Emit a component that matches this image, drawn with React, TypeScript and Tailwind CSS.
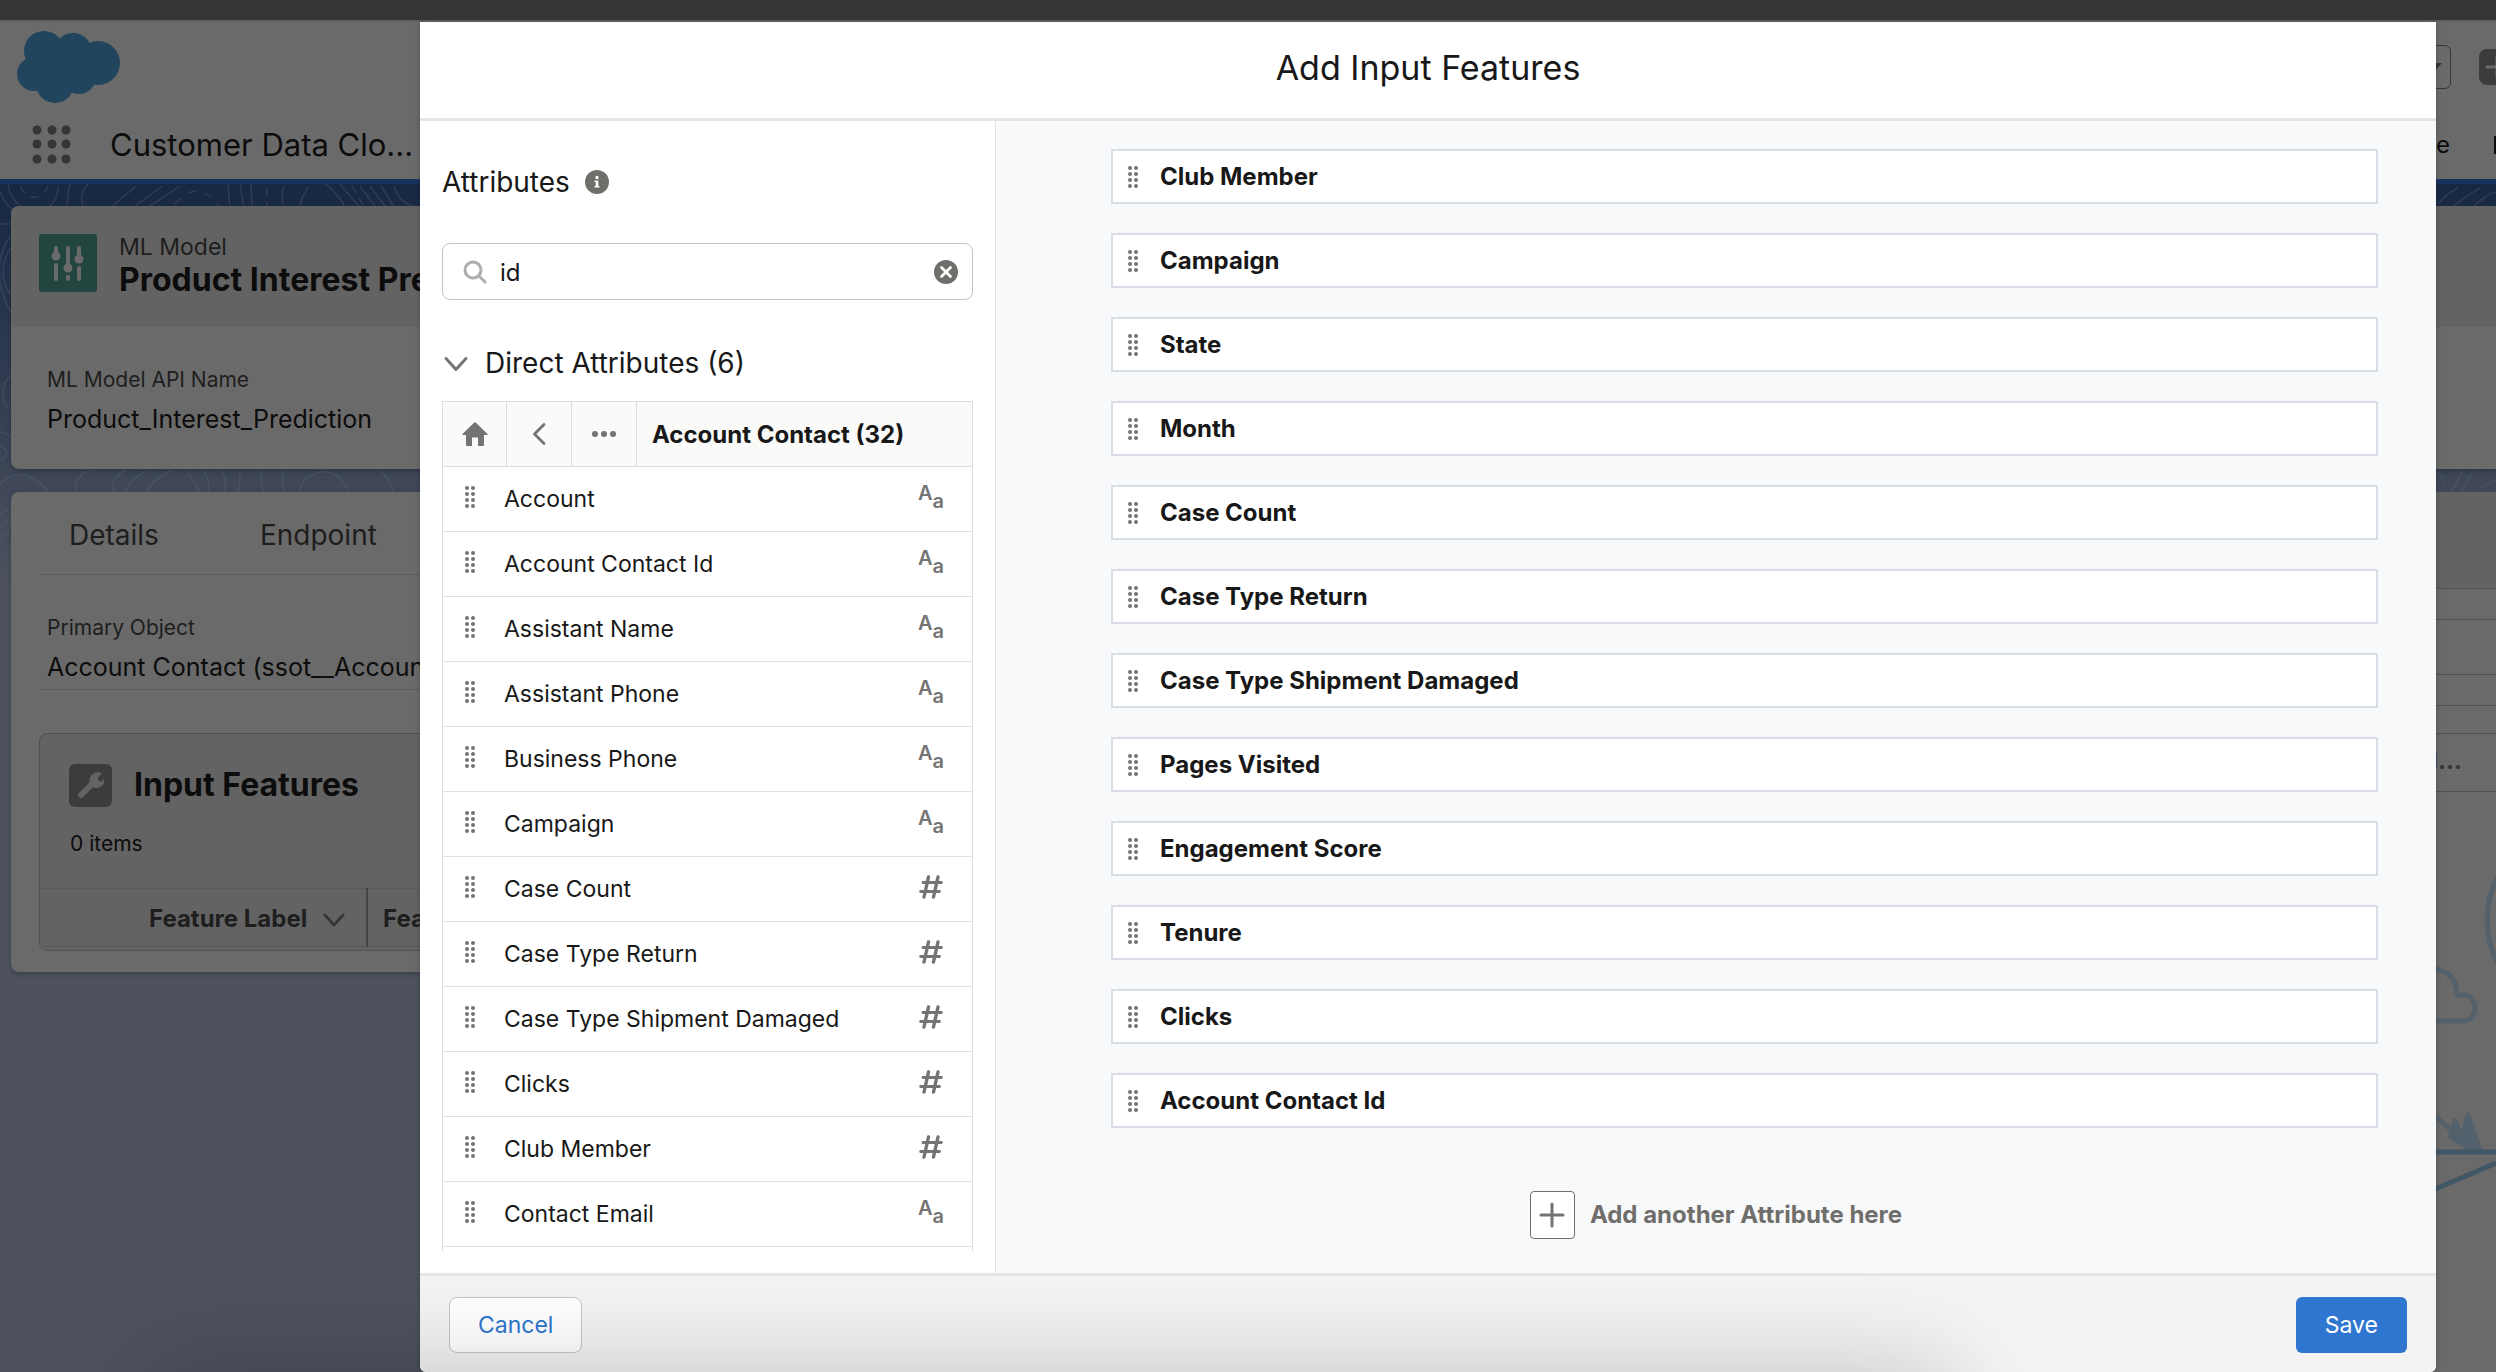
import React from "react";

type Kind = "text" | "number";

const attributes: { label: string; kind: Kind }[] = [
  { label: "Account", kind: "text" },
  { label: "Account Contact Id", kind: "text" },
  { label: "Assistant Name", kind: "text" },
  { label: "Assistant Phone", kind: "text" },
  { label: "Business Phone", kind: "text" },
  { label: "Campaign", kind: "text" },
  { label: "Case Count", kind: "number" },
  { label: "Case Type Return", kind: "number" },
  { label: "Case Type Shipment Damaged", kind: "number" },
  { label: "Clicks", kind: "number" },
  { label: "Club Member", kind: "number" },
  { label: "Contact Email", kind: "text" },
];

const selected = [
  "Club Member",
  "Campaign",
  "State",
  "Month",
  "Case Count",
  "Case Type Return",
  "Case Type Shipment Damaged",
  "Pages Visited",
  "Engagement Score",
  "Tenure",
  "Clicks",
  "Account Contact Id",
];

function DragHandle() {
  return (
    <svg width="10" height="24" viewBox="0 0 10 24" fill="#747474" aria-hidden="true" className="shrink-0">
      {[3, 9, 15, 21].map((y) => (
        <g key={y}>
          <circle cx="2" cy={y} r="2" />
          <circle cx="8" cy={y} r="2" />
        </g>
      ))}
    </svg>
  );
}

function KindIcon({ kind }: { kind: Kind }) {
  if (kind === "number") {
    return (
      <svg width="24" height="24" viewBox="0 0 24 24" fill="none" stroke="#747474" strokeWidth="3.4" strokeLinecap="round" aria-label="Number">
        <path d="M9.5 2 5 22M19 2 14.5 22" />
        <path d="M4 7.5H22.4M1.6 16.500H20.500" strokeWidth="2.8" />
      </svg>
    );
  }
  return (
    <span className="flex h-6 w-6 items-start justify-center text-[20px] font-semibold leading-[17px] text-[#747474]" aria-label="Text">
      <span>A</span>
      <span className="pt-2">a</span>
    </span>
  );
}

function Chevron({ size, color, width }: { size: number; color: string; width: number }) {
  return (
    <svg width={size} height={size} viewBox="0 0 24 24" fill="none" stroke={color} strokeWidth={width} strokeLinecap="round" strokeLinejoin="round" aria-hidden="true">
      <path d="M2 7.5 12 18.500 22 7.5" />
    </svg>
  );
}

function Contours() {
  return (
    <svg className="absolute inset-x-0 top-0 h-[380px] w-full" viewBox="0 0 2496 380" preserveAspectRatio="xMinYMin slice" fill="none" stroke="#5f6b80" strokeOpacity="0.3" strokeWidth="1.500" aria-hidden="true">
      <path d="M0 8c4 10 8 16 14 18h28c12-4 16-12 16-24M8 0c2 18 14 24 24 26" />
      <path d="M20 2c6 14 22 16 28 0" strokeDasharray="9 6" />
      <path d="M70 0c-3 8-2 16-3 26M88 0c-8 8-8 20-2 26M108 26 136 2M130 26 162 2M144 26 180 2" />
      <path d="M175 20c14-16 30-20 44 4" strokeDasharray="9 8" />
      <path d="M228 0l2 26M240 0l4 26M251 0c0 10 0 18 3 26M284 2c-3 8-2 16 0 24M309 2c-6 8-9 16-10 24M325 0c10 6 16 16 22 26M340 0l22 26M360 2l18 24M370 2l18 24M381 2l15 24M394 2c4 14 12 20 24 21" />
      <path d="M267 4v22M352 2l14 24" strokeDasharray="8 6" />
      <path d="M0 40h12M12 50C-4 70-6 100 12 130M12 62C0 78 0 100 12 112M12 190C0 200 0 220 12 226M0 248c6 0 10 4 12 8M0 262c10 4 8 12 0 14" />
      <path d="M0 300c20-20 40-4 54 14M78 310c-6-12 2-22 14-24M116 310c-8-8-2-18 10-24M126 308c2-10 12-16 20-22M146 308c6-10 16-18 26-22M186 286c6 8 12 18 14 24M204 286c4 8 6 16 4 24M222 286c4 8 4 16 2 24M240 286c0 10 0 18-4 24M262 286c-2 10 0 18 4 24M284 286c-2 10-2 18 2 24M300 310c0-14 12-22 24-22s22 10 24 22M380 286c8 8 12 16 14 24" />
      <path d="M0 330c6 0 9-6 11-10M0 342c7-2 9-8 11-12M0 354c8-4 10-10 11-16" />
      <path d="M2438 20c6-8 12-12 20-16M2452 24c10-10 18-14 28-20M2472 24c8-8 16-14 24-16M2440 290l4 10M2450 310l14-24M2460 310l14-24M2480 304l16-8" />
    </svg>
  );
}

function Page() {
  return (
    <div className="flex h-full flex-col">
      <div className="h-5 shrink-0 bg-[#353535]" />
      <header className="flex h-[164px] shrink-0 flex-col border-t-2 border-b-[5px] border-t-[#5f5f5f] border-b-[#16325c] bg-[#6a6a6a]">
        <div className="flex h-[90px] items-center justify-between pl-[17px]">
          <svg width="104" height="73" viewBox="0 0 104 73" fill="#21455c" role="img" aria-label="Salesforce">
            <circle cx="27" cy="20" r="20" />
            <circle cx="56" cy="21" r="19" />
            <circle cx="81" cy="32" r="22" />
            <circle cx="17" cy="43" r="17" />
            <circle cx="38" cy="53" r="19" />
            <circle cx="62" cy="46" r="17" />
            <path d="M20 20h60v32H20z" />
          </svg>
          <div className="flex items-center gap-7">
            <button className="flex h-11 w-16 items-center justify-end rounded-md border border-[#353535] pr-2" aria-label="Favorites">
              <svg width="16" height="9" viewBox="0 0 16 9" fill="#353535" aria-hidden="true"><path d="M0 0h16L8 9z" /></svg>
            </button>
            <button className="flex h-9 w-[17px] items-center overflow-hidden rounded-l-lg bg-[#3c3c3c]" aria-label="Add">
              <svg width="24" height="24" viewBox="0 0 24 24" stroke="#6a6a6a" strokeWidth="3" strokeLinecap="round" className="ml-1.5 shrink-0" aria-hidden="true"><path d="M2 12h20M12 2v20" /></svg>
            </button>
          </div>
        </div>
        <div className="flex flex-1 items-center justify-between pb-0.5 pl-8">
          <div className="flex items-center gap-[39px]">
            <svg width="39" height="39" viewBox="0 0 39 39" fill="#353535" aria-hidden="true">
              {[5, 19, 34].map((y) => [5, 20, 34].map((x) => <circle key={`${x}-${y}`} cx={x} cy={y} r="4.500" />))}
            </svg>
            <span className="text-[31px] leading-10 text-[#0c0c0c]">Customer Data Clo...</span>
          </div>
          <div className="flex items-center gap-11 text-2xl text-[#0c0c0c]"><span>Home</span><span className="h-[18px] w-0.5 bg-[#0c0c0c]" /></div>
        </div>
      </header>

      <main className="relative flex flex-1 flex-col bg-[#4d525e] pl-[11px] pt-[22px]">
        <div className="absolute inset-x-0 top-0 h-[400px] bg-linear-to-b from-[#172844] to-[#4d525e]" />
        <Contours />
        <section className="relative mb-[23px] h-[263px] shrink-0 overflow-hidden rounded-l-lg bg-[#6a6a6a] shadow-[0_2px_5px_rgba(0,0,0,0.25)]">
          <div className="flex h-[121px] gap-[22px] bg-[#636363] pl-7 pt-7">
            <svg width="58" height="58" viewBox="0 0 58 58" className="shrink-0" aria-hidden="true">
              <rect width="58" height="58" rx="3" fill="#23453f" />
              <g stroke="#6a6a6a" strokeWidth="4" strokeLinecap="round">
                <path d="M17 14v8M17 31v14M29 14v20M29 43v2M40 14v10M40 34v11" />
              </g>
              <g fill="#6a6a6a"><circle cx="17" cy="22" r="4.500" /><circle cx="29" cy="34" r="4.500" /><circle cx="40" cy="25" r="4.500" /></g>
            </svg>
            <div>
              <p className="text-[23px] leading-[26px] text-[#1e1e1e]">ML Model</p>
              <h1 className="whitespace-nowrap text-[32px] font-bold leading-10 text-[#0c0c0c]">Product Interest Prediction</h1>
            </div>
          </div>
          <div className="pl-9 pt-[37px]">
            <p className="text-[21px] leading-8 text-[#1e1e1e]">ML Model API Name</p>
            <p className="pt-[3px] text-[25px] leading-10 text-[#0c0c0c]">Product_Interest_Prediction</p>
          </div>
        </section>

        <div className="relative flex min-h-0 flex-1 gap-6">
          <section className="h-[480px] w-[1600px] rounded-lg bg-[#6a6a6a] pl-7 shadow-[0_2px_5px_rgba(0,0,0,0.25)]">
            <nav className="flex h-[83px] items-center gap-[101px] border-b border-[#5c5c5c] pl-[30px] pt-1 text-[28px] text-[#1e1e1e]">
              <a href="#details">Details</a>
              <a href="#endpoint">Endpoint</a>
            </nav>
            <div className="h-[115px] border-b border-[#5c5c5c] pl-2 pt-[37px]">
              <p className="text-[21px] leading-8 text-[#1e1e1e]">Primary Object</p>
              <p className="text-[25px] leading-[46px] text-[#0c0c0c]">Account Contact (ssot__AccountContact__dlm)</p>
            </div>
            <div className="mt-[43px] h-[218px] rounded-lg border border-[#515151] bg-[#636363]">
              <div className="flex h-[102px] items-center gap-[22px] pl-[29px]">
                <svg width="43" height="43" viewBox="0 0 43 43" aria-hidden="true">
                  <rect width="43" height="43" rx="6" fill="#3c3c3c" />
                  <path d="M12 31 25 18" stroke="#636363" strokeWidth="6" strokeLinecap="round" />
                  <path d="M33 9.500 28.500 14l1.500 3 3 .500L35 14c1.500 6-2.500 10.500-8 10-4.500-.500-7-4-6.500-8C21 11 26 7 31 8.500z" fill="#636363" />
                </svg>
                <h2 className="text-[32px] font-bold text-[#0c0c0c]">Input Features</h2>
              </div>
              <p className="h-[52px] pl-[30px] text-[21px] leading-[16px] text-[#0c0c0c]">0 items</p>
              <table className="w-full border-y border-[#5a5a5a] text-left text-[24px] text-[#1e1e1e]">
                <thead>
                  <tr className="h-[58px]">
                    <th className="w-[327px] border-r-2 border-[#444444] pl-[109px] pt-0.5 font-bold">
                      <span className="flex items-center gap-4">Feature Label <Chevron size={22} color="#353535" width={3} /></span>
                    </th>
                    <th className="pl-[15px] pt-0.5 font-bold">Feature API Name</th>
                  </tr>
                </thead>
              </table>
            </div>
          </section>

          <aside className="flex flex-1 flex-col rounded-tl-lg bg-[#6a6a6a]">
            <div className="h-24 bg-[#636363]" />
            <div className="h-8 border-y border-[#515151]" />
            <div className="h-[86px] border-b border-[#515151] pt-[54px]"><div className="border-t border-[#515151]" /></div>
            <div className="h-7 border-b border-[#515151]" />
            <div className="flex h-[58px] items-center border-b border-[#515151] pb-1 text-2xl font-bold text-[#353535]">
              <span className="w-full pr-[34px] text-right">Total...</span>
            </div>
            <svg className="ml-auto shrink-0" width="400" height="580" viewBox="0 0 400 580" fill="none" aria-hidden="true">
              <path d="M404 81C387 108 387 148 404 175" stroke="#53616c" strokeWidth="5" />
              <path d="M330 178c14-4 31 4 31 25h6c16 0 16 26 0 26H320" stroke="#53616c" strokeWidth="5" />
              <path d="M336 321 376 357" stroke="#53616c" strokeWidth="5" />
              <path d="M352 346l5-19q2-3 4 0l4 11 5-16q2-4 4 0l13 37h-15z" fill="#53616c" />
              <path d="M300 360H400M330 401 400 371" stroke="#425766" strokeWidth="5" />
            </svg>
          </aside>
        </div>
      </main>
    </div>
  );
}

function AttributePanel() {
  return (
    <section className="flex w-[576px] shrink-0 flex-col border-r border-[#e0e3ea] bg-white px-[22px] pb-[22px]">
      <div className="flex h-[122px] items-center gap-[15px]">
        <h3 className="text-[28px] leading-9">Attributes</h3>
        <svg width="24" height="24" viewBox="0 0 24 24" role="img" aria-label="Info">
          <circle cx="12" cy="12" r="12" fill="#706e6b" />
          <circle cx="12" cy="7.500" r="1.700" fill="#fff" />
          <path d="M9.500 10.500H13.300V16H14.500V17.500H9.500V16H10.700V12H9.500z" fill="#fff" />
        </svg>
      </div>
      <label className="flex h-[57px] shrink-0 items-center gap-[13px] rounded-lg border border-[#c4c4c4] px-[14px]">
        <svg width="24" height="24" viewBox="0 0 24 24" fill="none" stroke="#aeaeae" strokeWidth="3" strokeLinecap="round" className="ml-1.5" aria-hidden="true">
          <circle cx="10" cy="10" r="8" />
          <path d="M16 16l6 6" />
        </svg>
        <input type="text" aria-label="Search attributes" defaultValue="id" className="min-w-0 flex-1 pt-0.5 text-[24px] outline-none" />
        <button aria-label="Clear search">
          <svg width="24" height="24" viewBox="0 0 24 24" aria-hidden="true">
            <circle cx="12" cy="12" r="12" fill="#706e6b" />
            <path d="M7.500 7.500l9 9M16.500 7.500l-9 9" stroke="#fff" strokeWidth="2.800" strokeLinecap="round" />
          </svg>
        </button>
      </label>
      <button className="mt-10 flex h-11 shrink-0 items-center gap-[17px] pl-0.5 pt-0.5 text-left text-[28px]">
        <Chevron size={24} color="#747474" width={3} />
        Direct Attributes (6)
      </button>
      <div className="mt-[17px] flex min-h-0 flex-1 flex-col overflow-hidden border-x border-t border-[#d8dde6]">
        <div className="flex h-16 shrink-0 divide-x divide-[#d8dde6] bg-[#fafaf9]">
          <button className="flex w-16 items-center justify-center" aria-label="Home">
            <svg width="26" height="24" viewBox="0 0 26 24" fill="#747474" aria-hidden="true"><path d="M12.300.600a1 1 0 0 1 1.400 0L25.500 12q.800 1-.500 1H22v10a1 1 0 0 1-1 1h-5v-8.500h-6V24H5a1 1 0 0 1-1-1V13H1q-1.300 0-.500-1z" /></svg>
          </button>
          <button className="flex w-[65px] items-center justify-center" aria-label="Back">
            <svg width="14" height="24" viewBox="0 0 14 24" fill="none" stroke="#747474" strokeWidth="2.800" strokeLinecap="round" strokeLinejoin="round" aria-hidden="true"><path d="M12 2.500 2.500 12 12 21.500" /></svg>
          </button>
          <button className="flex w-[65px] items-center justify-center" aria-label="More levels">
            <svg width="24" height="8" viewBox="0 0 24 8" fill="#747474" aria-hidden="true"><circle cx="3" cy="4" r="3" /><circle cx="12" cy="4" r="3" /><circle cx="21" cy="4" r="3" /></svg>
          </button>
          <h4 className="flex flex-1 items-center pl-[15px] pt-0.5 text-[24px] font-bold">Account Contact (32)</h4>
        </div>
        <ul className="border-t border-[#d8dde6]">
          {attributes.map((a) => (
            <li key={a.label} className="flex h-[65px] items-center gap-[29px] border-b border-[#e1e1e5] pl-[22px] pr-[29px]">
              <span className="pb-1"><DragHandle /></span>
              <span className="flex-1 text-[23px]">{a.label}</span>
              <span className="pb-1"><KindIcon kind={a.kind} /></span>
            </li>
          ))}
        </ul>
      </div>
    </section>
  );
}

export default function App() {
  return (
    <div className="relative h-screen overflow-hidden font-['Inter',sans-serif] text-[#181818]">
      <Page />
      <div className="absolute inset-0 flex pl-[420px] pr-[60px] pt-[22px]">
        <div role="dialog" aria-label="Add Input Features" className="flex min-w-0 flex-1 flex-col overflow-hidden rounded-b-md bg-white shadow-[0_2px_6px_rgba(0,0,0,0.2)]">
          <header className="flex h-[99px] shrink-0 items-center justify-center border-b-[3px] border-[#e5e5e5] pb-1.5">
            <h2 className="text-[34px]">Add Input Features</h2>
          </header>
          <div className="flex min-h-0 flex-1">
            <AttributePanel />
            <section className="flex min-w-0 flex-1 flex-col bg-[#f8f9fb] pl-[115px] pr-[58px] pt-7">
              <ul className="flex flex-col gap-[29px]">
                {selected.map((s) => (
                  <li key={s} className="flex h-[55px] items-center gap-[22px] border-2 border-[#d8dde6] bg-white pl-[15px] text-[24px] font-bold">
                    <DragHandle />
                    {s}
                  </li>
                ))}
              </ul>
              <button className="mr-[57px] mt-[63px] flex items-center justify-center gap-[15px] self-center text-[24px] font-bold text-[#706e6b]">
                <span className="flex h-12 w-[45px] items-center justify-center rounded-sm border border-[#706e6b] bg-white">
                  <svg width="26" height="26" viewBox="0 0 26 26" stroke="#747474" strokeWidth="3" strokeLinecap="round" aria-hidden="true"><path d="M2 13h22M13 2v22" /></svg>
                </span>
                Add another Attribute here
              </button>
            </section>
          </div>
          <footer className="flex h-[99px] shrink-0 items-start justify-between border-t-[3px] border-[#e5e5e5] bg-[#f3f3f3] px-[29px] pt-[21px] text-[23px]">
            <button className="h-14 rounded-lg border border-[#c4c4c4] bg-white px-7 text-[#2e76cf]">Cancel</button>
            <button className="h-14 rounded-md bg-[#2e76cf] px-[29px] text-white">Save</button>
          </footer>
        </div>
      </div>
      <div className="pointer-events-none absolute left-[150px] right-[546px] top-full h-40 shadow-[0_0_100px_rgba(0,0,0,0.2)]" />
    </div>
  );
}
